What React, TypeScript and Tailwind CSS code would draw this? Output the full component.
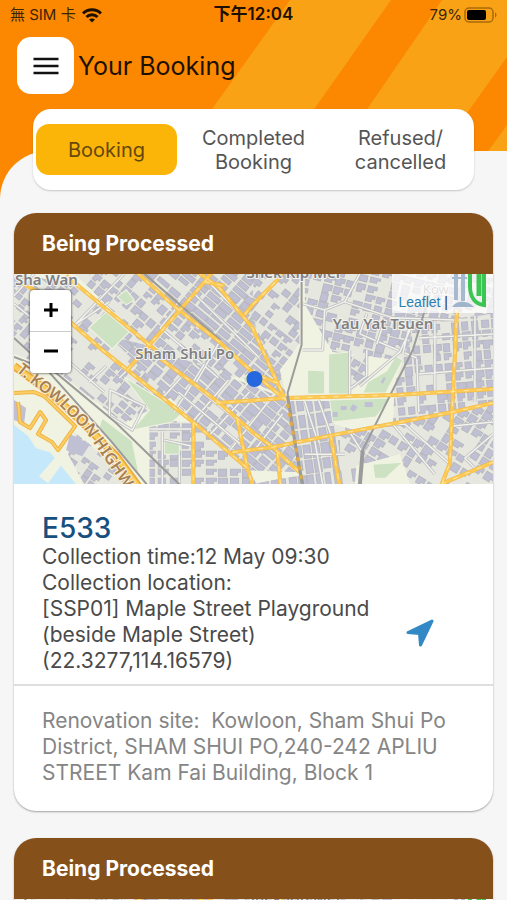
import { useId, useState } from 'react';

type Booking = {
  id: string;
  status: string;
  code?: string;
  time?: string;
  location?: string[];
  site?: string;
};

const bookings: Booking[] = [
  {
    id: 'a',
    status: 'Being Processed',
    code: 'E533',
    time: '12 May 09:30',
    location: ['[SSP01] Maple Street Playground', '(beside Maple Street)', '(22.3277,114.16579)'],
    site: 'Kowloon, Sham Shui Po District, SHAM SHUI PO,240-242 APLIU STREET Kam Fai Building, Block 1',
  },
  { id: 'b', status: 'Being Processed' },
];

const tabs = ['Booking', 'Completed Booking', 'Refused/ cancelled'];

// Building blocks: each district has its own street angle and block size
const districts = [
  { points: '0,0 60,10 180,110 110,150 40,95 0,80', angle: 40, w: 9, h: 7, fill: 0.62, ox: 90, oy: 70 },
  { points: '60,0 125,0 205,70 240,105 180,100 135,72', angle: 40, w: 9, h: 8, fill: 0.75, ox: 140, oy: 40 },
  { points: '125,0 240,0 272,122 240,110', angle: 40, w: 15, h: 6, fill: 0.97, ox: 200, oy: 50 },
  { points: '95,62 135,72 272,125 285,198 233,196 180,148', angle: 40, w: 13, h: 7, fill: 0.95, ox: 200, oy: 120 },
  { points: '135,145 182,149 235,196 242,210 135,210', angle: 0, w: 11, h: 8, fill: 0.72, ox: 180, oy: 180 },
  { points: '240,0 285,0 285,70 262,100 236,40', angle: 38, w: 9, h: 8, fill: 0.7, ox: 260, oy: 45 },
  { points: '272,127 318,127 320,150 345,158 340,210 238,210 288,200', angle: -8, w: 8, h: 14, fill: 0.95, ox: 300, oy: 170 },
  { points: '290,0 478,0 478,45 400,88 318,78 290,30', angle: 14, w: 10, h: 8, fill: 0.8, ox: 380, oy: 40 },
  { points: '335,82 352,78 352,105 336,118', angle: 30, w: 8, h: 9, fill: 0.8, ox: 345, oy: 100 },
  { points: '400,50 478,40 478,130 378,152 380,110', angle: -5, w: 9, h: 9, fill: 0.82, ox: 430, oy: 90 },
  { points: '325,160 478,130 478,210 395,210 385,180 325,196', angle: 32, w: 10, h: 9, fill: 0.68, ox: 410, oy: 170 },
  { points: '60,158 100,190 118,210 70,210 54,180', angle: 35, w: 8, h: 7, fill: 0.55, ox: 80, oy: 190 },
];

const parks = [
  '75,54 92,38 115,58 98,75',
  '103,23 112,16 120,26 112,31',
  '110,103 168,139 158,148 118,156 135,136',
  '88,144 118,167 125,201 85,153',
  '150,166 165,166 165,180 150,180',
  '293,96 310,97 310,120 293,120',
  '314,80 335,78 335,120 314,120',
  '348,119 353,108 372,97 381,82 388,86 371,119',
  '315,126 376,124 361,143 318,148',
  '358,190 388,188 371,204 360,204',
  '228,104 240,96 240,108 232,110',
];

const minorRoads = [
  'M0 30 L40 62 M20 0 L0 22 M95 28 L62 50 M110 0 L60 52 M137 73 L105 104',
  'M162 34 L146 54 L204 104 M180 20 L245 84 M205 68 L182 108 M192 6 L240 55',
  'M170 100 L150 122 M190 90 L160 138 M214 106 L178 148 M235 118 L196 160 M252 130 L214 178 M268 140 L240 176',
  'M184 112 L232 152 M164 118 L226 170 M148 86 L230 152',
  'M288 30 L310 36 L330 28 L345 0 M310 36 L308 76 L288 76 M330 28 L378 44 L440 46 M345 60 L402 84 M352 40 L345 60',
  'M370 46 L362 70 M395 50 L388 80 M335 76 L335 120 M352 76 L352 102 L336 114 M345 112 L385 78 L398 50',
  'M402 85 L404 138 M404 100 L478 94 M404 64 L478 60 M460 42 L460 128 M420 47 L420 120 M362 152 L390 150 L435 190',
  'M290 127 L302 164 M304 126 L316 160 M335 158 L350 182 M378 150 L420 200 M438 152 L478 148 M478 160 L450 184 L462 196',
  'M135 155 L178 155 M148 158 L148 210 M178 172 L150 166 M165 180 L165 210 M290 180 L330 180 M300 166 L308 210',
  'M96 116 L130 132 L118 156 L95 142 Z M48 82 L90 118 M75 108 L92 92',
];

const mainRoads = [
  'M8 9 L30 22 L57 49 L88 76 L180 149 L233 194 L238 210',
  'M52 2 L140 75 L148 86 L204 128 L238 158 L258 173 L285 198',
  'M122 -2 L162 34 L205 68 L240 100 L271 126',
  'M113 96 L135 71 L192 6 L198 -2',
  'M183 -2 L205 14 L238 54 L248 76 L263 109 L271 126 M190 8 L210 12 M263 109 L240 100',
  'M268 -2 L263 6 L238 31 L230 41',
  'M202 129 L271 124 L381 121 L478 115',
  'M218 178 L258 173 L318 161 L438 138 L478 129',
  'M442 36 L440 81 L438 119 L435 189 L426 212',
  'M426 210 L478 188',
  'M316 161 L325 212',
  'M263 179 L266 212',
  'M179 149 L179 212',
  'M223 146 L233 194',
];

const harbourRoads =
  'M0 119 L20 118 L30 122 L61 152 L44 176 L38 168 L24 160 L32 146 L26 138 L16 154 L6 148 L4 128';

const expressway = 'M0 92 L34 117 L68 148 L102 182 L124 212';

const rails = [
  'M0 83 L42 99 L102 149 L167 212',
  'M0 64 L26 88 L60 126 L96 166 L134 212',
  'M287 0 L287 71 L273 119 L280 166 L289 212',
  'M415 20 L398 76 L348 176 L345 212',
  'M130 0 L206 66 M272 126 L248 108',
];

function makeBlocks() {
  let seed = 7;
  const rand = () => {
    seed = (seed * 16807) % 2147483647;
    return seed / 2147483647;
  };
  return districts.map((d) => {
    let path = '';
    for (let y = -120; y < 120; y += d.h + 1) {
      for (let x = -120; x < 120; x += d.w + 1) {
        const a = rand();
        const b = rand();
        const c = rand();
        if (a > d.fill) continue;
        const w = Math.round(d.w * (0.65 + b * 0.35));
        const h = Math.round(d.h * (0.65 + c * 0.35));
        const notch = d.fill < 0.9 && b > 0.4 ? 3 : 0;
        path += `M${x} ${y}h${w}v${h - notch}h${-notch}v${notch}h${notch - w}z`;
      }
    }
    return { ...d, path };
  });
}

const blocks = makeBlocks();

function StreetMap() {
  const uid = useId();

  return (
    <svg
      viewBox="0 0 478 210"
      preserveAspectRatio="xMidYMid slice"
      className="block h-full w-full"
      fontFamily="'Noto Sans', sans-serif"
      aria-label="Map"
    >
      <rect width="478" height="210" fill="#f1f3e2" />
      {blocks.map((d, i) => (
        <g key={i}>
          <clipPath id={`${uid}-${i}`}>
            <polygon points={d.points} />
          </clipPath>
          <g clipPath={`url(#${uid}-${i})`}>
            <polygon points={d.points} fill="#e6e7de" />
            <path
              d={d.path}
              fill="#bfc0d3"
              stroke="#b8b8c0"
              strokeWidth="1"
              transform={`translate(${d.ox} ${d.oy}) rotate(${d.angle})`}
            />
          </g>
        </g>
      ))}

      {/* harbour */}
      <path d="M0 151 L14 162 L22 174 L36 178 L44 188 L62 210 L0 210 Z" fill="#c5e9fb" />
      <path d="M25 202 L44 180 L52 184 L34 209 Z" fill="#f1f3e2" />
      <path d="M0 126 L12 134 L10 150 L0 146 Z M56 160 L76 170 L68 182 L52 176 Z" fill="#bfc0d3" />

      {parks.map((p) => (
        <polygon key={p} points={p} fill="#cde2c3" stroke="#f1f3e2" strokeWidth="1" />
      ))}
      <path d="M326 132h6v4h-6z M318 138h5v5h-5z M338 130l5 3-4 5-4-3z M366 108l3-5 2 1-3 6z M350 128h8v5h-8z" fill="#bfc0d3" />

      {minorRoads.map((d) => (
        <g key={d} fill="none" strokeLinejoin="round">
          <path d={d} stroke="#bdbdbd" strokeWidth="3" />
          <path d={d} stroke="#f2f2f0" strokeWidth="1.5" />
        </g>
      ))}

      {rails.map((d) => (
        <path key={d} d={d} fill="none" stroke="#9b9b99" strokeWidth="2" />
      ))}
      <path d="M348 176 L345 212" stroke="#9b9b9b" strokeWidth="4" />

      <g fill="none" strokeLinejoin="round">
        <path d={harbourRoads} stroke="#efb240" strokeWidth="4" />
        <path d={harbourRoads} stroke="#fcce66" strokeWidth="2" />
        {mainRoads.map((d) => (
          <path key={d} d={d} stroke="#f0b848" strokeWidth="4" />
        ))}
        {mainRoads.map((d) => (
          <path key={d} d={d} stroke="#fdca55" strokeWidth="3" />
        ))}
        {mainRoads.map((d) => (
          <path key={d} d={d} stroke="#ffe7a6" strokeWidth="1" strokeDasharray="5 8" />
        ))}
        <path d="M130 0 L162 28 L206 66" stroke="#a09f92" strokeWidth="1" />
        <path d="M273 122 L280 166 L288 212" stroke="#9b9b99" strokeWidth="3" />
        <path d="M273 130 L280 166 L288 212" stroke="#e3ac40" strokeWidth="3" strokeDasharray="4 5" />
        {/* expressway */}
        <path d={expressway} stroke="#eba836" strokeWidth="8" />
        <path d={expressway} stroke="#fdcb5c" strokeWidth="5" />
      </g>

      <g fontWeight="600" fill="#808083" stroke="#f3f3ee" strokeWidth="2" paintOrder="stroke" strokeLinejoin="round">
        <text x="1" y="11" fontSize="15">Sha Wan</text>
        <text x="232" y="4" fontSize="15">Shek Kip Mei</text>
        <text x="121" y="85" fontSize="15">Sham Shui Po</text>
        <text x="318" y="55" fontSize="15">Yau Yat Tsuen</text>
        <text x="408" y="20" fontSize="13" fontWeight="400">Kow</text>
      </g>
      <path id={`${uid}-hw`} d="M2 97 L18 110 L42 128 L72 158 L94 190 L116 222 L140 260" fill="none" />
      <text fontSize="16" fontWeight="600" fill="#a88055" stroke="#faf0d4" strokeWidth="2" paintOrder="stroke">
        <textPath href={`#${uid}-hw`}>T. KOWLOON HIGHWAY</textPath>
      </text>
      <circle cx="240" cy="105" r="8" fill="#2467de" />
    </svg>
  );
}

function BookingMap() {
  return (
    <div className="relative h-[210px] overflow-hidden">
      <StreetMap />

      {/* zoom control */}
      <div className="absolute top-4 left-4 flex w-[41px] flex-col overflow-hidden rounded-sm bg-white shadow-[0_0_2px_1px_rgba(0,0,0,0.4)]">
        <button type="button" aria-label="Zoom in" className="flex h-[42px] items-center justify-center border-b border-[#ccc]">
          <svg width="16" height="16" viewBox="0 0 16 16" stroke="#000" strokeWidth="3">
            <path d="M1 7H15M8 0V14" />
          </svg>
        </button>
        <button type="button" aria-label="Zoom out" className="flex h-[41px] items-center justify-center">
          <svg width="16" height="16" viewBox="0 0 16 16" stroke="#000" strokeWidth="3">
            <path d="M1 6H15" />
          </svg>
        </button>
      </div>

      {/* attribution */}
      <div className="absolute top-0 right-0 flex h-[39px] items-end gap-1 bg-white/75 pr-1.5 pl-1.5 font-['Liberation_Sans',sans-serif] text-sm text-[#333]">
        <span className="pb-px">
          <a href="#leaflet" className="text-[#2b7fb0]">Leaflet</a> |
        </span>
        <svg width="35" height="34" viewBox="0 0 35 34" className="mb-[5px]" fill="none">
          <path d="M4 0V26M11 0V27" stroke="#a6bacf" strokeWidth="4" />
          <path d="M0 4H15" stroke="#a6bacf" strokeWidth="2" />
          <path d="M0 33C4 26 16 26 22 33Z" fill="#a0b5cc" />
          <path d="M18 0V12C18 23 23 30 32 31V0" stroke="#3dc553" strokeWidth="4" />
          <path d="M27 0V22" stroke="#3dc553" strokeWidth="5" />
        </svg>
      </div>
    </div>
  );
}

function BookingCard({ booking }: { booking: Booking }) {
  return (
    <article className="shrink-0 overflow-hidden rounded-[22px] bg-white shadow-[0_1px_2px_rgba(0,0,0,0.35)]">
      <h2 className="bg-[#86501a] px-7 py-[17px] text-[21px] leading-[27px] font-bold text-white">
        {booking.status}
      </h2>
      <BookingMap />

      {booking.code && (
        <>
          <div className="flex items-end border-b-2 border-[#dedede] px-7 pt-7 pb-2.5 text-[21px] leading-[26px] text-[#4a4a4a]">
            <div className="flex-1">
              <h3 className="text-[28px] leading-8 font-medium text-[#17507f]">{booking.code}</h3>
              <p>{`Collection time:${booking.time}`}</p>
              <p>Collection location:</p>
              {booking.location?.map((line) => (
                <p key={line}>{line}</p>
              ))}
            </div>
            <button type="button" aria-label="Navigate" className="mr-[31px] mb-[27px]">
              <svg width="28" height="28" viewBox="0 0 28 28" fill="#3389c6" stroke="#3389c6" strokeWidth="3" strokeLinejoin="round">
                <path d="M26 2L2 13.500L13.500 14.500L14.500 26Z" />
              </svg>
            </button>
          </div>
          <p className="px-7 pt-[22px] pb-[25px] text-[21px] leading-[26px] whitespace-pre-wrap text-[#858585]">
            {`Renovation site:  ${booking.site}`}
          </p>
        </>
      )}
    </article>
  );
}

function StatusBar() {
  return (
    <div className="grid h-[30px] grid-cols-3 items-center px-2.5 font-[Inter,'Noto_Sans_CJK_TC',sans-serif] text-[15px] text-[#3a2408]">
      <div className="flex items-center gap-1.5">
        <span className="whitespace-nowrap">無 SIM 卡</span>
        <svg width="20" height="15" viewBox="0 0 20 15" fill="none" stroke="#1c1000" strokeWidth="3">
          <path d="M1 5.500C6 0.500 14 0.500 19 5.500" />
          <path d="M4.500 9C7.500 6 12.500 6 15.500 9" />
          <path d="M10 14.500L7 11.500C8.500 10 11.500 10 13 11.500Z" fill="#1c1000" stroke="none" />
        </svg>
      </div>
      <span className="text-center text-[17px] font-semibold text-[#1c1000]">下午12:04</span>
      <div className="flex items-center justify-end gap-0.5">
        <span>79%</span>
        <svg width="33" height="16" viewBox="0 0 33 16" fill="none">
          <rect x="1" y="1" width="28" height="14" rx="4" stroke="#a8690c" strokeWidth="1.500" />
          <rect x="3" y="3" width="19" height="10" rx="2" fill="#000" />
          <path d="M31 5.500C33 6 33 10 31 10.500Z" fill="#a8690c" />
        </svg>
      </div>
    </div>
  );
}

export default function App() {
  const [active, setActive] = useState(0);

  return (
    <div className="relative flex h-screen flex-col overflow-hidden bg-[#fb8800] font-[Inter,sans-serif]">
      <svg
        viewBox="0 0 507 210"
        preserveAspectRatio="none"
        className="absolute inset-x-0 top-0 h-[210px] w-full"
        fill="#f9a216"
        aria-hidden="true"
      >
        <path d="M290 0H391L243 210H140Z" />
        <path d="M442 0H507V57L398 210H298Z" />
        <path d="M507 125V210H446Z" />
      </svg>

      <header className="relative z-10">
        <StatusBar />
        <div className="flex items-center gap-1 px-[17px] pt-[7px]">
          <button type="button" aria-label="Menu" className="flex size-[57px] items-center justify-center rounded-[14px] bg-white">
            <svg width="26" height="18" viewBox="0 0 26 18" stroke="#111" strokeWidth="2.500">
              <path d="M0.500 2H25.500M0.500 9H25.500M0.500 16H25.500" />
            </svg>
          </button>
          <h1 className="text-[25px] leading-8 text-[#1c1000]">Your Booking</h1>
        </div>

        <nav className="mx-[33px] mt-[15px] grid h-[81px] grid-cols-3 items-center gap-1.5 rounded-[18px] bg-white px-[3px] shadow-[0_1px_2px_rgba(0,0,0,0.2)]">
          {tabs.map((tab, i) => (
            <button
              key={tab}
              type="button"
              onClick={() => setActive(i)}
              className={
                i === active
                  ? 'h-[51px] rounded-[13px] bg-[#fbb508] px-3 text-xl leading-6 text-[#65480d]'
                  : 'h-[51px] px-3 text-xl leading-6 text-[#555]'
              }
            >
              {tab}
            </button>
          ))}
        </nav>
      </header>

      <main className="relative -mt-[39px] flex flex-1 flex-col gap-[27px] overflow-hidden rounded-tl-[48px] bg-[#f6f6f6] px-3.5 pt-[62px]">
        {bookings.map((b) => (
          <BookingCard key={b.id} booking={b} />
        ))}
      </main>
    </div>
  );
}
